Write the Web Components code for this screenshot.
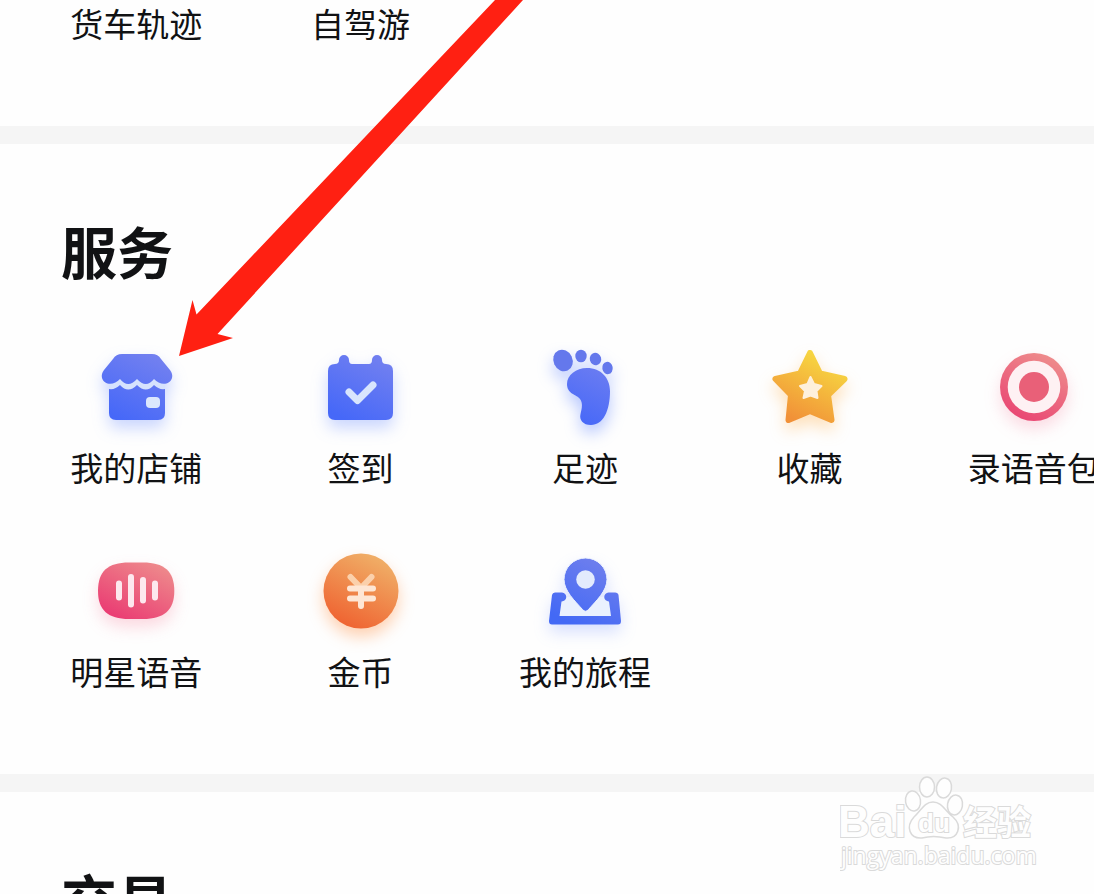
<!DOCTYPE html>
<html lang="zh-CN">
<head>
<meta charset="UTF-8">
<meta name="viewport" content="width=device-width, initial-scale=1">
<title>服务</title>
<style>
    body {
        margin: 0;
        height: 100vh;
        overflow: hidden;
        background: #fefefe;
        color: #111214;
        font-family: "Noto Sans CJK SC", sans-serif;
    }
</style>
</head>
<body>
<service-page>
    <service-section compact>
        <service-item>货车轨迹</service-item>
        <service-item>自驾游</service-item>
    </service-section>
    <service-section heading="服务">
        <service-item icon="shop">我的店铺</service-item>
        <service-item icon="checkin">签到</service-item>
        <service-item icon="foot">足迹</service-item>
        <service-item icon="star">收藏</service-item>
        <service-item icon="record">录语音包</service-item>
        <service-item icon="voice">明星语音</service-item>
        <service-item icon="coin">金币</service-item>
        <service-item icon="trip">我的旅程</service-item>
    </service-section>
    <service-section heading="交易"></service-section>
    <pointer-arrow slot="overlay"></pointer-arrow>
    <site-watermark slot="overlay"></site-watermark>
</service-page>

<script>
const ICONS = {
    shop: {
        colors: ['#7280f0', '#4668f8'],
        shadow: 'rgba(80, 120, 255, 0.3)',
        art: `
            <path fill="#d6e2fd" d="M33 50H89V66H33Z"/>
            <path fill="url(#g)" d="M46 27H76Q82 27 85 32L94 43Q97 47 96 51C94 58 84 59 78 52Q70 62 61 52Q52 62 44 52C38 59 28 58 26 51Q25 47 28 43L37 32Q40 27 46 27Z"/>
            <path fill="url(#g)" d="M33 62Q39 63 44 58Q52 67 61 58Q70 67 78 58Q83 63 89 62V86Q89 93 82 93H40Q33 93 33 86Z"/>
            <rect x="70" y="70" width="14" height="11" rx="4" fill="#dbe7fd"/>`
    },
    checkin: {
        colors: ['#7280f0', '#4668f8'],
        shadow: 'rgba(80, 120, 255, 0.3)',
        art: `
            <path fill="url(#g)" d="M34 37Q38 37 38 33A5 5 0 0 1 48 33Q48 37 51 37H68Q71 37 71 33A5 5 0 0 1 81 33Q81 37 85 37Q92 37 92 44V86Q92 93 85 93H34Q27 93 27 86V44Q27 37 34 37Z"/>
            <path d="M48 65L56.500 73.500L72 58" fill="none" stroke="#d8e5fd" stroke-width="7" stroke-linecap="round" stroke-linejoin="round"/>`
    },
    foot: {
        colors: ['#7280f0', '#4668f8'],
        shadow: 'rgba(80, 120, 255, 0.4)',
        art: `
            <path fill="url(#g)" d="M62 41C76 41 85 51 85 64C85 84 78 98 66 98C58 98 54 93 55.500 87C57 81 58 76 55 72C51 67 42 67 42 57C42 48 51 41 62 41Z"/>
            <g fill="#6478ec">
                <ellipse cx="38" cy="33.500" rx="9.500" ry="11" transform="rotate(-25 38 33.500)"/>
                <ellipse cx="56" cy="29" rx="5.700" ry="6.300"/>
                <ellipse cx="70.500" cy="32" rx="5.700" ry="6.300" transform="rotate(-15 70.500 32)"/>
                <ellipse cx="82.500" cy="41" rx="5.200" ry="6.200" transform="rotate(-10 82.500 41)"/>
            </g>`
    },
    star: {
        colors: ['#f7d941', '#f19138'],
        shadow: 'rgba(255, 170, 60, 0.35)',
        art: `
            <path fill="url(#g)" stroke="url(#g)" stroke-width="6" stroke-linejoin="round" d="M61 26L71 46.500L95.500 52L79 68L82.500 93L61 84L39.500 93L42 68L26.500 52L51 46.500Z"/>
            <path fill="#fef0db" stroke="#fef0db" stroke-width="2" stroke-linejoin="round" d="M61.500 50L65 57L72.500 59L67.500 64L68.500 71L61.500 68.500L54.500 71L56 64L51 59L58.500 57Z"/>`
    },
    record: {
        colors: ['#ee8c8c', '#e94673'],
        shadow: 'rgba(240, 80, 120, 0.2)',
        art: `
            <circle cx="60" cy="60" r="34" fill="url(#g)"/>
            <circle cx="60" cy="60" r="26.300" fill="#fef1f3"/>
            <circle cx="60" cy="60" r="15" fill="#e96078"/>`
    },
    voice: {
        colors: ['#ee8b8c', '#ea3972'],
        shadow: 'rgba(240, 80, 120, 0.22)',
        art: `
            <path fill="url(#g)" d="M53 31.500H67C88 31.500 98.300 40 98.300 60C98.300 79 88 88 67 88H53C32 88 22 79 22 60C22 40 32 31.500 53 31.500Z"/>
            <path d="M43 52.500V66.500M55 46V73.500M67 49V69.500M79 52.500V66.500" fill="none" stroke="#fde8ee" stroke-width="6" stroke-linecap="round"/>`
    },
    coin: {
        colors: ['#f0ac65', '#ef6633'],
        shadow: 'rgba(255, 140, 60, 0.4)',
        art: `
            <circle cx="60" cy="60" r="37.500" fill="url(#g)"/>
            <path d="M49.500 46L60 57L70.500 46" fill="none" stroke="#fbd0ab" stroke-width="6" stroke-linecap="round"/>
            <path d="M49 57.500H72M49 67.500H72M60 58V75" fill="none" stroke="#fee6d4" stroke-width="6" stroke-linecap="round"/>`
    },
    trip: {
        colors: ['#6f7fed', '#4369f5'],
        shadow: 'rgba(80, 120, 255, 0.22)',
        art: `
            <path fill="#eaf1fe" d="M37 66H84L87 86H33Z"/>
            <path fill="url(#g)" d="M30 61.500H37A4.500 4.500 0 0 1 36.500 70.500L34.500 85H86L84 70.500A4.500 4.500 0 0 1 83.500 61.500H90Q93 61.500 93.500 64L96 90Q96 93.500 93 93.500H27Q24 93.500 24 90L27 64Q27.500 61.500 30 61.500Z"/>
            <path fill="url(#g)" stroke="#edf3fe" stroke-width="1" d="M60.500 27A21.500 21.500 0 0 1 82 48.500C82 60 71 70 63.500 78.500Q60.500 82 57.500 78.500C50 70 39 60 39 48.500A21.500 21.500 0 0 1 60.500 27Z"/>
            <circle cx="60.500" cy="48.500" r="9.300" fill="#e3ebfd"/>`
    }
};

class ServicePage extends HTMLElement {
    connectedCallback() {
        this.attachShadow({ mode: 'open' });
        this.shadowRoot.innerHTML = `
            <style>
                :host {
                    display: block;
                    position: relative;
                    height: 100%;
                    overflow: hidden;
                }

                main {
                    display: flex;
                    flex-direction: column;
                }
            </style>
            <main><slot></slot></main>
            <slot name="overlay"></slot>
        `;
    }
}

class ServiceSection extends HTMLElement {
    connectedCallback() {
        const heading = this.getAttribute('heading');
        this.attachShadow({ mode: 'open' });
        this.shadowRoot.innerHTML = `
            <style>
                :host {
                    display: block;
                    padding: 70px 0 82px 24px;
                    overflow: hidden;
                    border-bottom: 18px solid #f5f5f5;
                }

                :host([compact]) {
                    padding-top: 3px;
                }

                :host(:last-of-type) {
                    border-bottom: 0;
                }

                h2 {
                    margin: 0 0 41px 37px;
                    font-size: 56px;
                    line-height: 72px;
                    font-weight: 700;
                }

                /* the fifth column runs past the right edge */
                .grid {
                    display: grid;
                    grid-template-columns: repeat(5, 1fr);
                    row-gap: 43px;
                    margin-right: -52px;
                }
            </style>
            ${heading ? `<h2>${heading}</h2>` : ''}
            <div class="grid"><slot></slot></div>
        `;
    }
}

class ServiceItem extends HTMLElement {
    connectedCallback() {
        const icon = this.getAttribute('icon');
        this.attachShadow({ mode: 'open' });
        this.shadowRoot.innerHTML = `
            <style>
                :host {
                    display: block;
                }

                a {
                    display: flex;
                    flex-direction: column;
                    align-items: center;
                    color: inherit;
                    text-decoration: none;
                    font-size: 33px;
                    line-height: 41px;
                    white-space: nowrap;
                }
            </style>
            <a href="#">
                ${icon ? `<service-icon name="${icon}"></service-icon>` : ''}
                <span><slot></slot></span>
            </a>
        `;
    }
}

class ServiceIcon extends HTMLElement {
    connectedCallback() {
        const { colors, shadow, art } = ICONS[this.getAttribute('name')];
        this.attachShadow({ mode: 'open' });
        this.shadowRoot.innerHTML = `
            <style>
                :host {
                    display: block;
                }

                svg {
                    display: block;
                    width: 120px;
                    height: 120px;
                    overflow: visible;
                    filter: drop-shadow(0 8px 8px ${shadow});
                }
            </style>
            <svg viewBox="0 0 120 120" aria-hidden="true">
                <defs>
                    <linearGradient id="g" gradientUnits="userSpaceOnUse" x1="76" y1="28" x2="44" y2="92">
                        <stop offset="0" stop-color="${colors[0]}"/>
                        <stop offset="1" stop-color="${colors[1]}"/>
                    </linearGradient>
                </defs>
                ${art}
            </svg>
        `;
    }
}

class PointerArrow extends HTMLElement {
    connectedCallback() {
        this.attachShadow({ mode: 'open' });
        this.shadowRoot.innerHTML = `
            <style>
                :host {
                    display: block;
                    position: absolute;
                    top: 0;
                    left: 179px;
                    pointer-events: none;
                }

                svg {
                    display: block;
                }
            </style>
            <svg width="346" height="358" viewBox="0 0 346 358" aria-hidden="true">
                <path fill="#ff2012" d="M0 356L13.500 300L17.500 314.500L316 0H344L38.500 334L54 338Z"/>
            </svg>
        `;
    }
}

class SiteWatermark extends HTMLElement {
    connectedCallback() {
        this.attachShadow({ mode: 'open' });
        this.shadowRoot.innerHTML = `
            <style>
                :host {
                    display: block;
                    position: absolute;
                    right: 34px;
                    top: 770px;
                    pointer-events: none;
                }

                svg {
                    display: block;
                }

                text {
                    font-family: "Liberation Sans", "Noto Sans CJK SC", sans-serif;
                    font-weight: 700;
                    paint-order: stroke;
                }

                .url {
                    font-family: "Open Sans", sans-serif;
                    font-weight: 400;
                }
            </style>
            <svg width="220" height="110" viewBox="0 0 220 110" fill="#fefefe" stroke="#dadada" stroke-width="2">
                <g stroke-width="1.500">
                    <ellipse cx="73" cy="31" rx="7.500" ry="10" transform="rotate(-8 73 31)"/>
                    <ellipse cx="87" cy="17" rx="7.500" ry="10"/>
                    <ellipse cx="104" cy="18" rx="7.500" ry="10" transform="rotate(10 104 18)"/>
                    <ellipse cx="115" cy="35" rx="7.500" ry="10" transform="rotate(10 115 35)"/>
                    <path d="M93 32C102 32 105 41 113 47C123 56 118 69 106 68C98 66 89 66 82 68C70 69 65 57 74 47C81 41 84 32 93 32Z"/>
                </g>
                <text x="-2" y="67" font-size="44">Bai</text>
                <text x="78" y="62" font-size="26">du</text>
                <text x="123" y="65" font-size="34">经验</text>
                <text class="url" x="1" y="94" font-size="23">jingyan.baidu.com</text>
            </svg>
        `;
    }
}

customElements.define('service-page', ServicePage);
customElements.define('service-section', ServiceSection);
customElements.define('service-item', ServiceItem);
customElements.define('service-icon', ServiceIcon);
customElements.define('pointer-arrow', PointerArrow);
customElements.define('site-watermark', SiteWatermark);
</script>
</body>
</html>
